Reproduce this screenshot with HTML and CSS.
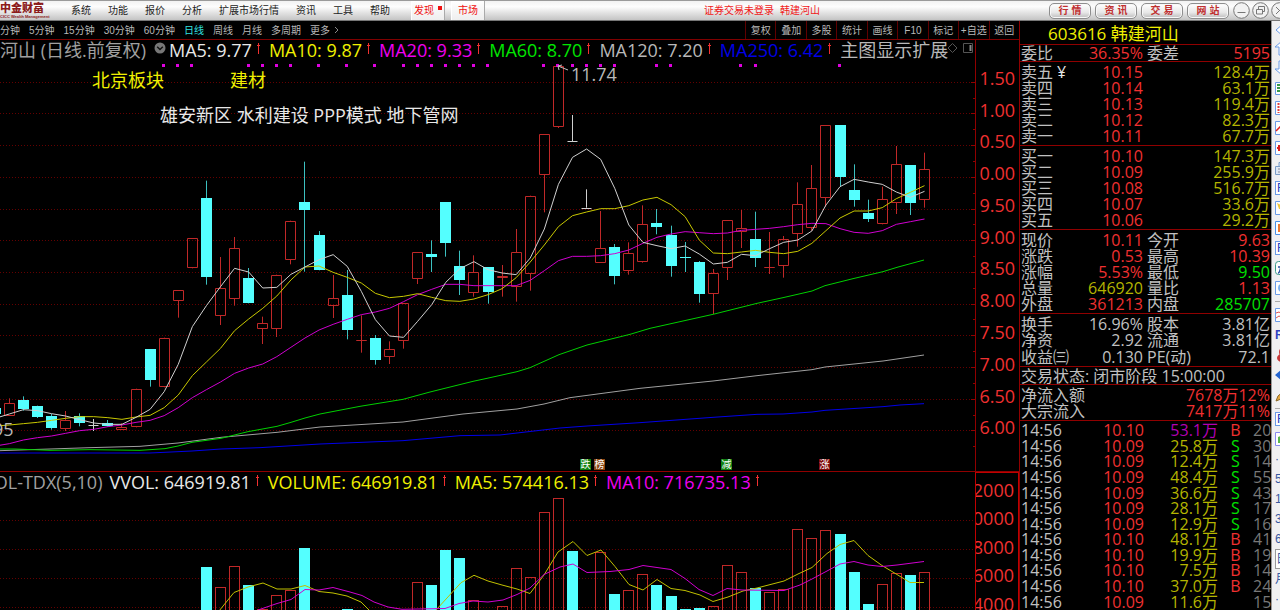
FILE: index.html
```html
<!DOCTYPE html>
<html lang="zh-CN">
<head>
<meta charset="utf-8">
<title>韩建河山 603616</title>
<link rel="stylesheet" href="styles.css">
</head>
<body>
<div class="app">
  <header class="titlebar">
    <div class="brand"><span class="brand-name">中金财富</span><span class="brand-sub">CICC Wealth Management</span></div>
    <nav class="menu">
      <button>系统</button><button>功能</button><button>报价</button><button>分析</button><button>扩展市场行情</button><button>资讯</button><button>工具</button><button>帮助</button>
    </nav>
    <div class="tabs"><button class="tab">发现<i class="dot"></i></button><button class="tab">市场</button></div>
    <div class="login"><span>证券交易未登录</span><span>韩建河山</span></div>
    <div class="pills"><button>行 情</button><button>资 讯</button><button>交 易</button><button>网 站</button></div>
    <div class="winctl">
      <button aria-label="最小化"><svg viewBox="0 0 17 17"><circle cx="8.500" cy="8.500" r="7.800"/><path d="M4.500 10.500h8"/></svg></button>
      <button aria-label="还原"><svg viewBox="0 0 17 17"><circle cx="8.500" cy="8.500" r="7.800"/><path d="M4.500 7.500h6v4.500h-6zM6.500 7.500v-3h6v5h-2"/></svg></button>
      <button aria-label="关闭"><svg viewBox="0 0 17 17"><circle cx="8.500" cy="8.500" r="7.800"/><path d="M5 5l7 7M12 5l-7 7"/></svg></button>
    </div>
  </header>
  <div class="body">
    <main class="main">
      <div class="toolbar">
        <div class="periods">
          <button>分钟</button><button>5分钟</button><button>15分钟</button><button>30分钟</button><button>60分钟</button><button class="on">日线</button><button>周线</button><button>月线</button><button>多周期</button><button class="more">更多<svg viewBox="0 0 6 8"><path d="M1 1l3 3-3 3"/></svg></button>
        </div>
        <div class="tools">
          <button>复权</button><button>叠加</button><button>多股</button><button>统计</button><button>画线</button><button>F10</button><button>标记</button><button>+自选</button><button>返回</button>
        </div>
      </div>
      <section class="pane price">
        <div class="plot">
          <svg class="chart" id="price" viewBox="0 40 975 426" preserveAspectRatio="xMinYMin meet"></svg>
          <div class="legend">
            <span class="name">河山 (日线.前复权)</span>
            <svg class="chev" viewBox="0 0 12 12"><circle cx="6" cy="6" r="5.500" fill="#777"/><path d="M3.200 4.800L6 7.600l2.800-2.800" fill="none" stroke="#111" stroke-width="1.400"/></svg>
            <span class="ma up w">MA5: 9.77</span><span class="ma up y">MA10: 9.87</span><span class="ma up m">MA20: 9.33</span><span class="ma up g">MA60: 8.70</span><span class="ma up s">MA120: 7.20</span><span class="ma up b">MA250: 6.42</span><span class="s">主图显示扩展</span>
            <svg class="corner" viewBox="0 0 26 12"><path d="M4.500 1.500l4.500 4.500-4.500 4.500L0 6z" stroke="#555"/><path d="M15.500 1.500h9v9h-9z" stroke="#555"/><path d="M22.500 3v6" stroke="#888" stroke-width="2"/></svg>
          </div>
        </div>
        <div class="axis"><span>1.50</span><span>1.00</span><span>0.50</span><span>0.00</span><span>9.50</span><span>9.00</span><span>8.50</span><span>8.00</span><span>7.50</span><span>7.00</span><span>6.50</span><span>6.00</span></div>
      </section>
      <section class="pane volume">
        <div class="plot">
          <svg class="chart" id="volume" viewBox="0 472 975 134" preserveAspectRatio="xMinYMin meet"></svg>
          <div class="legend">
            <span class="vname">VOL-TDX(5,10)</span>
            <span class="ma up w">VVOL: 646919.81</span><span class="ma up y">VOLUME: 646919.81</span><span class="ma up y">MA5: 574416.13</span><span class="ma up m">MA10: 716735.13</span>
          </div>
        </div>
        <div class="axis"><span>2000</span><span>0000</span><span>8000</span><span>6000</span><span>4000</span></div>
      </section>
    </main>

    <aside class="quote">
      <h1>603616 韩建河山</h1>
      <table class="r1"><colgroup><col class="c1"><col class="c2"><col class="c3"><col class="c4"></colgroup>
        <tr><th>委比</th><td class="red">36.35%</td><th>委差</th><td class="red">5195</td></tr></table>
      <table class="r5"><colgroup><col class="c1"><col class="c2"><col class="c5"></colgroup>
        <tr><th>卖五<span class="yen">¥</span></th><td class="red">10.15</td><td class="oliv">128.4万</td></tr>
        <tr><th>卖四</th><td class="red">10.14</td><td class="oliv">63.1万</td></tr>
        <tr><th>卖三</th><td class="red">10.13</td><td class="oliv">119.4万</td></tr>
        <tr><th>卖二</th><td class="red">10.12</td><td class="oliv">82.3万</td></tr>
        <tr><th>卖一</th><td class="red">10.11</td><td class="oliv">67.7万</td></tr></table>
      <table class="r5"><colgroup><col class="c1"><col class="c2"><col class="c5"></colgroup>
        <tr><th>买一</th><td class="red">10.10</td><td class="oliv">147.3万</td></tr>
        <tr><th>买二</th><td class="red">10.09</td><td class="oliv">255.9万</td></tr>
        <tr><th>买三</th><td class="red">10.08</td><td class="oliv">516.7万</td></tr>
        <tr><th>买四</th><td class="red">10.07</td><td class="oliv">33.6万</td></tr>
        <tr><th>买五</th><td class="red">10.06</td><td class="oliv">29.2万</td></tr></table>
      <table class="r5"><colgroup><col class="c1"><col class="c2"><col class="c3"><col class="c4"></colgroup>
        <tr><th>现价</th><td class="red">10.11</td><th>今开</th><td class="red">9.63</td></tr>
        <tr><th>涨跌</th><td class="red">0.53</td><th>最高</th><td class="red">10.39</td></tr>
        <tr><th>涨幅</th><td class="red">5.53%</td><th>最低</th><td class="grn">9.50</td></tr>
        <tr><th>总量</th><td class="oliv">646920</td><th>量比</th><td class="red">1.13</td></tr>
        <tr><th>外盘</th><td class="red">361213</td><th>内盘</th><td class="grn">285707</td></tr></table>
      <table class="r3"><colgroup><col class="c1"><col class="c2"><col class="c3"><col class="c4"></colgroup>
        <tr><th>换手</th><td>16.96%</td><th>股本</th><td>3.81亿</td></tr>
        <tr><th>净资</th><td>2.92</td><th>流通</th><td>3.81亿</td></tr>
        <tr><th>收益㈢</th><td>0.130</td><th>PE(动)</th><td>72.1</td></tr></table>
      <p class="status">交易状态: 闭市阶段 15:00:00</p>
      <table class="r2">
        <tr><th>净流入额</th><td class="red">7678万12%</td></tr>
        <tr><th>大宗流入</th><td class="red">7417万11%</td></tr></table>
      <div class="ticks"><table><colgroup><col class="t1"><col class="t2"><col class="t3"><col class="t4"><col class="t5"></colgroup>
        <tr><th>14:56</th><td class="red">10.10</td><td class="pur">53.1万</td><td class="red bs">B</td><td class="dim">20</td></tr>
        <tr><th>14:56</th><td class="red">10.09</td><td class="oliv">25.8万</td><td class="grn bs">S</td><td class="dim">30</td></tr>
        <tr><th>14:56</th><td class="red">10.09</td><td class="oliv">12.4万</td><td class="grn bs">S</td><td class="dim">14</td></tr>
        <tr><th>14:56</th><td class="red">10.09</td><td class="oliv">48.4万</td><td class="grn bs">S</td><td class="dim">55</td></tr>
        <tr><th>14:56</th><td class="red">10.09</td><td class="oliv">36.6万</td><td class="grn bs">S</td><td class="dim">43</td></tr>
        <tr><th>14:56</th><td class="red">10.09</td><td class="oliv">28.1万</td><td class="grn bs">S</td><td class="dim">17</td></tr>
        <tr><th>14:56</th><td class="red">10.09</td><td class="oliv">12.9万</td><td class="grn bs">S</td><td class="dim">16</td></tr>
        <tr><th>14:56</th><td class="red">10.10</td><td class="oliv">48.1万</td><td class="red bs">B</td><td class="dim">41</td></tr>
        <tr><th>14:56</th><td class="red">10.10</td><td class="oliv">19.9万</td><td class="red bs">B</td><td class="dim">19</td></tr>
        <tr><th>14:56</th><td class="red">10.10</td><td class="oliv">7.5万</td><td class="red bs">B</td><td class="dim">14</td></tr>
        <tr><th>14:56</th><td class="red">10.10</td><td class="oliv">37.0万</td><td class="red bs">B</td><td class="dim">24</td></tr>
        <tr><th>14:56</th><td class="red">10.09</td><td class="oliv">11.6万</td><td></td><td class="dim">15</td></tr>
      </table></div>
    </aside>

    <div class="strip">
      <button class="first" aria-label="菱形"><svg viewBox="0 0 16 16"><path d="M1 8l7-6 7 6-7 6z" fill="#fff" stroke="#6a9be8"/></svg></button>
      <button aria-label="上移"><svg viewBox="0 0 16 16"><path d="M8 1l7 6h-4v8H5V7H1z" transform="translate(-1 0)" fill="#fff" stroke="#6a9be8"/></svg></button>
      <button aria-label="下移"><svg viewBox="0 0 16 16"><path d="M8 15l7-6h-4V1H5v8H1z" transform="translate(-1 0)" fill="#fff" stroke="#6a9be8"/></svg></button>
      <button aria-label="列表"><svg viewBox="0 0 16 16"><path d="M.5 2.500h15v12H.5z" fill="#fff" stroke="#6a9be8"/><path d="M2 5h12M2 8h12M2 11h12" stroke="#3a9a4a" stroke-width="2"/></svg></button>
      <button aria-label="明细"><svg viewBox="0 0 16 16"><path d="M.5 1.500h15v13H.5z" fill="#fff" stroke="#6a9be8"/><path d="M3.500 3v10M6.500 3v10" stroke="#e04040" stroke-width="2" stroke-dasharray="2 1"/></svg></button>
      <button aria-label="分时"><svg viewBox="0 0 16 16"><path d="M.5 1.500h15v13H.5z" fill="#fff" stroke="#6a9be8"/><path d="M1 11l4-4 4 2 5-5" fill="none" stroke="#e02020" stroke-width="1.500"/></svg></button>
      <button aria-label="K线"><svg viewBox="0 0 16 16"><path d="M.5 1.500h15v13H.5z" fill="#fff" stroke="#6a9be8"/><path d="M4 5v6M2 8h4" stroke="#e02020" stroke-width="2"/></svg></button>
      <button aria-label="打印"><svg viewBox="0 0 16 16"><path d="M.5 6.500h15v8H.5zM4 6.500v-4h9" fill="#dfe8f5" stroke="#7a9cc8"/><path d="M3 9h10M3 12h10" stroke="#8a8a9a"/></svg></button>
      <button class="box">F</button>
      <button aria-label="自选"><svg viewBox="0 0 16 16"><path d="M.5 1.500h15v13H.5z" fill="#fff" stroke="#6a9be8"/><path d="M2 3l4 2 4-2v6H4z" fill="#f3c93c"/></svg></button>
      <button aria-label="资料"><svg viewBox="0 0 16 16"><path d="M.5 1.500h15v13H.5z" fill="#fff" stroke="#4a90e8"/><path d="M3 4h8v8H3z" fill="#ee7a30"/></svg></button>
      <button class="box">F</button>
      <button aria-label="公式"><svg viewBox="0 0 16 16"><rect x=".5" y="1.500" width="15" height="13" rx="3" fill="#fff" stroke="#3a9a8a"/><path d="M3 13c3 0 2-9 5-9M3 7h5" fill="none" stroke="#2a50a0" stroke-width="1.500"/></svg></button>
      <button aria-label="设置"><svg viewBox="0 0 16 16"><path d="M.5 1.500h15v13H.5z" fill="#fff" stroke="#6a9be8"/><circle cx="7" cy="8" r="3" fill="none" stroke="#7ab0f0" stroke-width="2"/></svg></button>
      <hr>
      <button aria-label="走势"><svg viewBox="0 0 16 16"><path d="M.5 1.500h15v13H.5z" fill="#fff" stroke="#6a9be8"/><path d="M1 6l3-1 3 2 3-3M1 11l3-2 4 2 5-3" fill="none" stroke="#e05050"/></svg></button>
      <button class="bold">R</button>
      <button aria-label="提醒"><svg viewBox="0 0 16 16"><circle cx="8" cy="5" r="4" fill="#c83a3a"/><ellipse cx="7" cy="11" rx="5" ry="4" fill="#c83a3a"/></svg></button>
      <button aria-label="后退"><svg viewBox="0 0 16 16"><path d="M0 8l7-6v4h8v4H7v4z" fill="#2464d0"/></svg></button>
      <button aria-label="画笔"><svg viewBox="0 0 16 16"><path d="M1 14l2-5 8-7 3 3-8 7z" fill="#e8a840" stroke="#8a6a2a"/></svg></button>
      <hr>
      <button class="box">F</button>
      <button aria-label="买入"><svg viewBox="0 0 16 16"><path d="M.5 1.500h15v13H.5z" fill="#fff" stroke="#8a8af0"/><path d="M3 6l5-2v8H3z" fill="#5ab84a"/></svg></button>
      <button>·</button><button>5</button><button>1</button><button>3</button><button>6</button><button class="pressed">日</button><button>月</button><button>·</button>
    </div>
  </div>
</div>
<script src="chart.js"></script>
</body>
</html>
```
FILE: styles.css
```css
* { box-sizing: border-box; }
body {
  margin: 0;
  background: #000;
  color: #c0c0c0;
  font-family: "Open Sans", "Noto Sans CJK SC", sans-serif;
}
button {
  border: 0;
  padding: 0;
  background: none;
  color: inherit;
  font: inherit;
  white-space: nowrap;
}
.app { display: flex; flex-direction: column; height: 100vh; overflow: hidden; }

.titlebar {
  display: flex;
  align-items: center;
  flex: none;
  height: 21px;
  border-top: 1px solid #9a9a9a;
  border-bottom: 1px solid #777;
  background: linear-gradient(#f2f2f2, #fdfdfd 30%, #e4e4e4 60%, #c4c4c4);
  color: #222;
  font: 10px/14px "Liberation Sans", "Noto Sans CJK SC", sans-serif;
  overflow: hidden;
}
.brand { display: flex; flex-direction: column; width: 71px; color: #8c1c1c; white-space: nowrap; }
.brand-name { font-size: 11px; line-height: 12px; font-weight: 900; }
.brand-sub { font-size: 4px; line-height: 5px; font-weight: 700; }
.menu { display: flex; gap: 17px; width: 340px; }
.tabs { display: flex; gap: 6px; align-self: stretch; color: #f01010; }
.tab {
  display: flex;
  align-items: center;
  justify-content: center;
  width: 34px;
  border-left: 1px solid #fff;
  border-right: 1px solid #aaa;
  background: linear-gradient(#fff, #eee);
}
.dot { width: 4px; height: 4px; margin: 0 0 6px 4px; background: #f01010; }
.login { display: flex; flex: 1; justify-content: center; gap: 6px; padding-right: 10px; color: #f01818; }
.pills { display: flex; gap: 4px; margin-right: 4px; }
.pills button {
  width: 42px;
  height: 16px;
  border: 1px solid #8e8e8e;
  border-radius: 5px;
  background: linear-gradient(#fff, #e8e8e8 60%, #bcbcbc);
  box-shadow: inset 0 0 0 1px #f8f8f8;
  color: #c03030;
  font-weight: 700;
}
.winctl { display: flex; gap: 2px; width: 47px; overflow: hidden; }
.winctl button { flex: none; display: flex; }
.winctl svg { width: 17px; height: 17px; fill: #f2f2f2; stroke: #777; stroke-width: 1; }

.body { display: flex; flex: 1; min-height: 0; }
.main { display: flex; flex-direction: column; flex: 1; min-width: 0; }

.toolbar {
  display: flex;
  justify-content: space-between;
  flex: none;
  height: 19px;
  border-bottom: 1px solid #800000;
  color: #b8b8b8;
  font: 10px/17px "Liberation Sans", "Noto Sans CJK SC", sans-serif;
}
.periods { display: flex; gap: 9px; }
.on { color: #30e0e0; }
.more { display: flex; align-items: center; gap: 4px; }
.more svg { width: 6px; height: 8px; fill: none; stroke: #888; }
.tools { display: flex; width: 274px; }
.tools button { flex: 1 1 0; border-left: 1px solid #600000; }

.pane { display: grid; grid-template-columns: minmax(0, 1fr) 44px; overflow: hidden; }
.price { flex: 432; min-height: 0; border-bottom: 1px solid #900000; }
.volume { flex: 138; min-height: 0; }
.plot { display: grid; grid-template: minmax(0, 1fr) / minmax(0, 1fr); min-height: 0; overflow: hidden; }
.chart { grid-area: 1 / 1; width: 100%; height: 100%; font-size: 18px; }
.legend {
  grid-area: 1 / 1;
  align-self: start;
  display: flex;
  align-items: center;
  font-size: 18px;
  line-height: 20px;
  white-space: nowrap;
}
.name, .vname { color: #a0a0a0; }
.name { width: 154px; }
.vname { margin: 0 7px 0 -17px; }
.chev { width: 12px; height: 12px; margin: 0 3px 4px 0; }
.corner { width: 26px; height: 12px; fill: none; margin-bottom: 4px; }
.ma { display: flex; }
.up::after {
  content: "";
  width: 5px;
  height: 11px;
  margin: 3px 8px 0 4px;
  background: linear-gradient(#f03030, #f03030) 2px 0 / 1px 11px no-repeat, linear-gradient(#f03030, #f03030) 1px 2px / 3px 1px no-repeat;
}
.w { color: #e8e8e8; }
.y { color: #f0f000; }
.m { color: #f000f0; }
.g { color: #00e600; }
.s { color: #b8b8b8; }
.b { color: #0000e6; }

.axis {
  display: flex;
  flex-direction: column;
  color: #f03030;
  font-size: 18px;
  text-align: right;
  padding-right: 4px;
  border-left: 1px solid #900000;
}
.axis span { flex: 1; display: flex; align-items: center; justify-content: flex-end; line-height: 20px; }
.price .axis { padding-top: 22px; padding-bottom: 28px; }
.volume .axis { border: 1px solid #c00000; border-bottom: 0; padding-top: 2px; margin-bottom: -8px; overflow: hidden; }

.quote {
  display: flex;
  flex-direction: column;
  flex: none;
  width: 252px;
  border-left: 1px solid #900000;
  font-size: 16px;
  line-height: 16px;
}
.quote h1 {
  margin: 0;
  padding-left: 28px;
  height: 23px;
  color: #f0f000;
  font-size: 17px;
  font-weight: 400;
  line-height: 26px;
}
.quote table { width: 100%; border-collapse: separate; border-spacing: 0; table-layout: fixed; }
.quote > table, .status, .ticks { border-top: 1px solid #900000; }
.quote th, .quote td { padding: 0; font-weight: 400; white-space: nowrap; line-height: 15px; }
.quote th { text-align: left; padding-left: 1px; }
.quote td { text-align: right; padding-right: 1px; }
.c1 { width: 54px; }
.c2 { width: 70px; }
.c3 { width: 48px; }
.quote th + td + th { padding-left: 3px; }
.r1 { height: 17px; }
.r5 { height: 84px; padding-top: 2px; }
.r3 { height: 53px; padding-top: 2px; }
.r2 { height: 36px; padding-top: 2px; }
.status { margin: 0; height: 18px; padding-left: 1px; line-height: 18px; white-space: nowrap; }
.ticks { flex: 1; min-height: 0; padding-top: 2px; overflow: hidden; }
.ticks table { height: 100%; }
.t1 { width: 54px; }
.t2 { width: 71px; }
.t3 { width: 74px; }
.t4 { width: 34px; }
.quote td.bs { text-align: center; }
.yen { color: #e8e8e8; margin-left: 4px; }
.red { color: #f03030; }
.oliv { color: #b4b400; }
.grn { color: #00e000; }
.pur { color: #b400b4; }
.dim { color: #787878; }

.strip {
  flex: none;
  width: 9px;
  padding-left: 3px;
  background: #f0f0f2;
  border-left: 1px solid #999;
  overflow: hidden;
  color: #3858a0;
  font: 12px/20px "Liberation Sans", "Noto Sans CJK SC", sans-serif;
}
.strip button { display: flex; align-items: center; width: 16px; height: 20px; }
.strip .first { height: 17px; }
.strip svg { width: 16px; height: 16px; flex: none; }
.strip hr { width: 16px; height: 1px; margin: 3px 0; border: 0; background: #aaa; }
.strip .box { height: 14px; margin: 3px 0; padding-left: 1px; border: 1px solid #6a9be8; background: #fff; color: #2040c0; }
.strip .bold { font-weight: 700; color: #3040c0; }
.strip .pressed { border: 1px solid #999; background: #fff; }
```
FILE: chart.js
```js
const NS = "http://www.w3.org/2000/svg";
const X = i => 9.3 + 14.08 * i;
const RED = "#c02828", CYAN = "#54ffff";

function add(svg, tag, attrs, text) {
  const el = document.createElementNS(NS, tag);
  for (const k in attrs) el.setAttribute(k, attrs[k]);
  if (text) el.textContent = text;
  svg.appendChild(el);
}
function line(svg, pts, color) {
  add(svg, "polyline", { points: pts.map(p => p.join(",")).join(" "), fill: "none", stroke: color, "stroke-width": 1 });
}
function grid(svg, y) {
  add(svg, "line", { x1: 0, x2: 975, y1: Math.round(y) + 0.5, y2: Math.round(y) + 0.5, stroke: "#640000", "stroke-dasharray": "1 2" });
}

/* kind, high, body top, body bottom, low; three units to a pixel */
const candles = [
["r",805,818,857,857],["c",799,810,836,842],["c",827,829,860,864],["c",852,857,895,899],["r",843,871,898,903],
["c",850,857,879,889],["x",867,886,886,903],["c",870,878,887,890],["r",880,892,899,900],["r",776,776,892,892],
["c",657,657,751,770],["r",623,623,772,772],["r",481,481,514,563],["r",325,325,415,415],["c",152,204,442,464],
["r",381,475,559,585],["r",321,353,506,527],["c",414,444,520,520],["r",560,580,598,642],["r",434,434,598,621],
["r",272,272,390,403],["c",95,217,240,425],["c",303,316,421,421],["r",435,504,527,564],["c",420,496,599,628],
["r",556,629,634,668],["c",615,623,691,704],["r",634,658,682,702],["r",520,520,632,656],["r",366,366,446,462],
["c",331,373,380,426],["c",217,217,338,380],["c",362,409,450,495],["r",376,427,488,500],["c",412,412,487,521],
["r",405,438,444,500],["r",297,367,470,515],["r",197,197,431,482],["r",13,13,135,247],["r",-192,-192,-10,-6],
["x",-45,34,34,34],["x",178,233,233,233],["r",243,353,398,398],["c",342,352,437,463],["r",337,370,424,434],
["r",226,283,395,398],["c",237,280,292,313],["c",287,315,409,440],["c",336,380,382,426],["c",393,397,491,518],
["r",417,430,493,552],["r",270,270,415,450],["r",240,295,307,354],["c",245,328,385,411],["r",306,410,413,432],
["r",318,327,407,443],["r",157,223,311,350],["r",105,173,293,302],["r",-14,-14,205,230],["c",-14,-14,140,170],
["c",103,181,211,230],["c",209,250,268,276],["r",170,208,283,283],["r",48,103,220,252],["c",105,105,218,255],
["r",68,118,211,233]];
const Y = v => v / 3 + 130;

const price = document.getElementById("price");
for (let k = 0; k < 12; k++) grid(price, 81.7 + 31.7 * k);

function candle(i, [kind, hi, top, bot, lo]) {
  const x = Math.round(X(i) - 0.5) + 0.5;
  const t = Math.round(Y(top)), b = Math.max(t + 1, Math.round(Y(bot)));
  if (kind === "x") {
    add(price, "path", { d: `M${x} ${Y(hi)}V${Y(lo)}M${x - 5} ${t + 0.5}h10`, stroke: "#d0d0d0", fill: "none" });
  } else if (kind === "c") {
    add(price, "path", { d: `M${x} ${Y(hi)}V${Y(lo)}`, stroke: "#3cc0c0" });
    add(price, "rect", { x: x - 5.5, y: t, width: 11, height: b - t, fill: CYAN });
  } else {
    add(price, "path", { d: `M${x} ${Y(hi)}V${t}M${x} ${b}V${Y(lo)}M${x - 5} ${t + 0.5}h10V${b - 0.5}h-10z`, stroke: RED, fill: "none" });
  }
}
candle(-1, ["c", 835, 835, 853, 853]);
candles.forEach((c, i) => candle(i, c));

const ma5 = [865,852,839,842,851,858,869,879,883,883,862,838,785,703,590,527,470,415,426,474,472,433,411,389,374,409,484,569,618,622,574,524,457,416,395,419,429,434,384,297,163,82,57,88,175,285,337,347,356,348,372,402,397,373,377,356,337,330,303,225,170,148,156,163,186,202,184];
const ma10 = [888,885,881,877,871,865,860,860,863,868,861,856,833,795,737,696,655,602,567,535,498,450,411,408,427,442,459,490,503,499,491,502,512,514,507,494,476,443,396,345,290,257,246,236,236,227,210,202,224,260,330,369,371,366,361,367,371,364,340,302,264,243,243,233,206,187,167];
const ma20 = [948,941,930,923,918,910,902,898,890,885,877,871,857,833,803,779,756,730,714,702,680,652,624,600,583,568,554,546,535,515,494,478,463,463,467,467,467,467,451,422,392,379,379,377,371,360,340,322,312,305,308,311,309,301,298,295,290,284,280,281,296,307,310,302,283,275,267];
const byIndex = a => a.map((v, k) => [X(k - 1), Y(v)]);
const byX = a => a.map(([x, v]) => [x, Y(v)]);
line(price, byX([[0,969],[150,969],[192,963],[221,957],[260,953],[320,942],[403,932],[460,917],[500,915],[560,894],[587,888],[640,878],[713,862],[757,853],[783,852],[812,846],[825,841],[883,830],[900,825],[924,821]]), "#0000e8");
line(price, byX([[0,962],[50,957],[90,953],[140,949],[178,939],[221,922],[277,907],[320,891],[403,876],[463,852],[517,837],[544,822],[570,803],[640,775],[713,753],[757,737],[812,719],[825,711],[883,693],[924,675]]), "#a0a0a0");
line(price, byX([[0,957],[15,957],[50,961],[90,959],[140,961],[165,956],[178,948],[192,937],[221,925],[248,905],[277,889],[291,877],[305,864],[320,852],[360,829],[403,808],[430,786],[473,754],[487,745],[517,725],[530,713],[559,674],[587,645],[630,613],[650,595],[713,553],[757,520],[783,503],[812,483],[825,467],[853,446],[883,425],[897,412],[924,390]]), "#00d000");
line(price, byIndex(ma20), "#d000d0");
line(price, byIndex(ma10), "#c8c800");
line(price, byIndex(ma5), "#d0d0d0");

for (const i of [11,12,13,17,18,19,20,22,24,26,28,29,30,31,32,33,34,38,39,40,41,42,43,46,47,52,53,59])
  add(price, "rect", { x: Math.round(X(i)) - 2, y: 64, width: 3, height: 3, fill: "#e000e0" });

for (let k = 0; k < 24; k++) {
  const y = Math.round(81.7 + 15.85 * k) + 0.5;
  add(price, "path", { d: `M975 ${y}h${k % 2 ? -2 : -4}`, stroke: "#900000" });
}
add(price, "path", { d: "M558 66l10 4M558 66l1 4M558 66l4-1", stroke: "#c0c0c0", fill: "none" });
add(price, "text", { x: 571, y: 81, fill: "#b8b8b8" }, "11.74");
add(price, "text", { x: -7, y: 436, fill: "#b8b8b8" }, "95");
add(price, "text", { x: 92, y: 87, fill: "#f0f000" }, "北京板块");
add(price, "text", { x: 230, y: 87, fill: "#f0f000" }, "建材");
add(price, "text", { x: 160, y: 122, fill: "#e8e8e8" }, "雄安新区 水利建设 PPP模式 地下管网");
for (const [x, label, bg] of [[580, "跌", "#108010"], [594, "榜", "#8a4510"], [721, "减", "#108010"], [819, "涨", "#800c0c"]]) {
  add(price, "rect", { x, y: 459, width: 11, height: 11, fill: bg });
  add(price, "text", { x: x + 0.5, y: 468, fill: "#fff", "font-size": 10 }, label);
}

const volume = document.getElementById("volume");
for (const y of [520, 549, 578, 607]) grid(volume, y);
const bars = { 14:["c",567],15:["r",587],16:["r",566],17:["c",585],18:["r",609],19:["r",595],20:["r",590],21:["c",548],24:["c",609],
29:["r",582],30:["c",585],31:["c",550],32:["c",558],33:["r",600],35:["r",606],36:["r",568],37:["r",577],38:["r",512],39:["r",498],
40:["c",551],42:["r",552],43:["c",594],44:["r",590],45:["r",574],46:["c",585],47:["c",596],48:["c",609],49:["c",608],50:["r",606],
51:["r",565],52:["r",572],53:["c",588],54:["r",592],55:["r",589],56:["r",529],57:["r",538],58:["r",530],59:["c",534],60:["c",572],
61:["c",604],62:["r",584],63:["r",573],64:["c",575],65:["r",572] };
for (const i in bars) {
  const [kind, y] = bars[i], x = Math.round(X(+i) - 0.5) - 5;
  if (kind === "c") add(volume, "rect", { x, y, width: 11, height: 640 - y, fill: CYAN });
  else add(volume, "rect", { x: x + 0.5, y: y + 0.5, width: 10, height: 640 - y, fill: "none", stroke: RED });
}
line(volume, [[219,611],[234,592.5],[248,587],[263,583],[277,589],[291,589],[305,585.5],[319,591.5],[333,593],[347,596],[361,602],[370,611]], "#c0c000");
line(volume, [[436,610],[461,582.7],[474,575.3],[488,581],[502,585],[517,589],[530,593.5],[544,575],[558,552],[573,541.5],[587,555.5],[601,550],[615,566.5],[629,584.5],[643,590],[657,579.5],[671,588.5],[685,590.5],[700,595],[713,601.5],[728,597],[743,591],[757,588],[784,581],[798,574],[812,567.5],[827,553.5],[840,544.5],[854,540.5],[868,555.5],[882,565.5],[897,574.5],[910,582.5],[924,582.5]], "#c0c000");
line(volume, [[258,610],[277,603.5],[291,599.5],[305,589.5],[319,590],[333,587.5],[350,592],[362,595.5],[374,602],[388,607],[402,609.3],[445,608.5],[459,603.5],[473,601],[488,602],[503,600],[517,594.5],[530,588],[544,574.5],[560,567],[573,564],[587,572.5],[610,571.5],[629,569.5],[643,565.5],[671,569.5],[685,578.5],[699,589.5],[713,595.5],[727,588.5],[742,590],[784,590.5],[800,585],[812,579],[827,571],[840,564],[854,561.5],[868,565],[882,566.5],[897,565],[924,561.5]], "#d000d0");
```
